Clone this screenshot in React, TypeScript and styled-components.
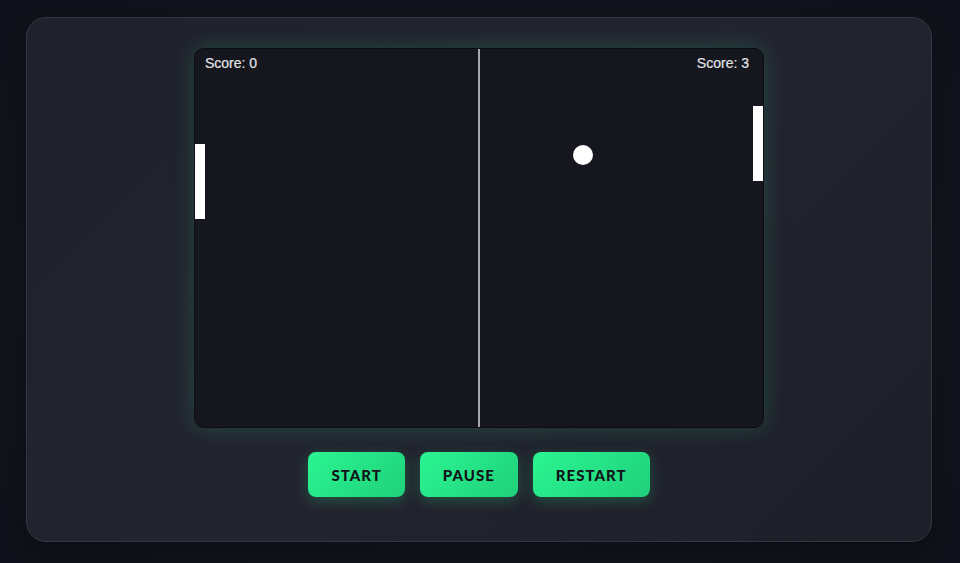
import styled, { createGlobalStyle } from "styled-components";

const GlobalStyle = createGlobalStyle`
  html, body {
    margin: 0;
    padding: 0;
    background: radial-gradient(ellipse at center, #1a1b26 0%, #11111b 100%);
    min-height: 100vh;
    font-family: "Lato", "Liberation Sans", sans-serif;
  }
`;

const Page = styled.div`
  display: flex;
  justify-content: center;
  padding: 17px 28px 21px 26px;
`;

const Card = styled.div`
  width: 906px;
  box-sizing: border-box;
  display: flex;
  flex-direction: column;
  align-items: center;
  gap: 24px;
  padding: 30px 0 44px;
  border-radius: 20px;
  border: 1px solid #353643;
  background: linear-gradient(135deg, #20212b 0%, #23242f 50%, #1e1f29 100%);
  box-shadow: 0 10px 30px rgba(0, 0, 0, 0.35);
`;

const Board = styled.div`
  position: relative;
  width: 570px;
  height: 380px;
  box-sizing: border-box;
  border: 1px solid #0c0d12;
  border-radius: 10px;
  background: #15161e;
  overflow: hidden;
  box-shadow: 0 0 22px rgba(40, 220, 150, 0.22);
`;

const CenterLine = styled.div`
  position: absolute;
  left: 283px;
  top: 0;
  bottom: 0;
  width: 2px;
  background: #a8a9ad;
`;

const Score = styled.span<{ $side: "left" | "right" }>`
  position: absolute;
  top: 6px;
  ${(p) => (p.$side === "left" ? "left: 10px;" : "right: 14px;")}
  font-family: "Liberation Sans", Arial, sans-serif;
  font-size: 14px;
  color: #e4e4e6;
  -webkit-text-stroke: 0.2px #e4e4e6;
`;

const Paddle = styled.div<{ $side: "left" | "right"; $y: number }>`
  position: absolute;
  ${(p) => (p.$side === "left" ? "left: 0;" : "right: 0;")}
  top: ${(p) => p.$y}px;
  width: 10px;
  height: 75px;
  background: #ffffff;
`;

const Ball = styled.div<{ $x: number; $y: number }>`
  position: absolute;
  left: ${(p) => p.$x - 10}px;
  top: ${(p) => p.$y - 10}px;
  width: 20px;
  height: 20px;
  border-radius: 50%;
  background: #ffffff;
`;

const Controls = styled.div`
  display: flex;
  gap: 15px;
`;

const Button = styled.button`
  height: 45px;
  padding: 0 23px;
  border: none;
  border-radius: 8px;
  background: linear-gradient(135deg, #2bf592 0%, #1fd07a 100%);
  color: #111319;
  font-family: "Lato", "Liberation Sans", sans-serif;
  font-weight: 900;
  font-size: 15px;
  letter-spacing: 1px;
  cursor: pointer;
  box-shadow: 0 4px 14px rgba(40, 230, 140, 0.25);
`;

export default function App() {
  return (
    <>
      <GlobalStyle />
      <Page>
        <Card>
          <Board>
            <CenterLine />
            <Score $side="left">Score: 0</Score>
            <Score $side="right">Score: 3</Score>
            <Paddle $side="left" $y={95} />
            <Paddle $side="right" $y={57} />
            <Ball $x={388} $y={106} />
          </Board>
          <Controls>
            <Button>START</Button>
            <Button>PAUSE</Button>
            <Button>RESTART</Button>
          </Controls>
        </Card>
      </Page>
    </>
  );
}
